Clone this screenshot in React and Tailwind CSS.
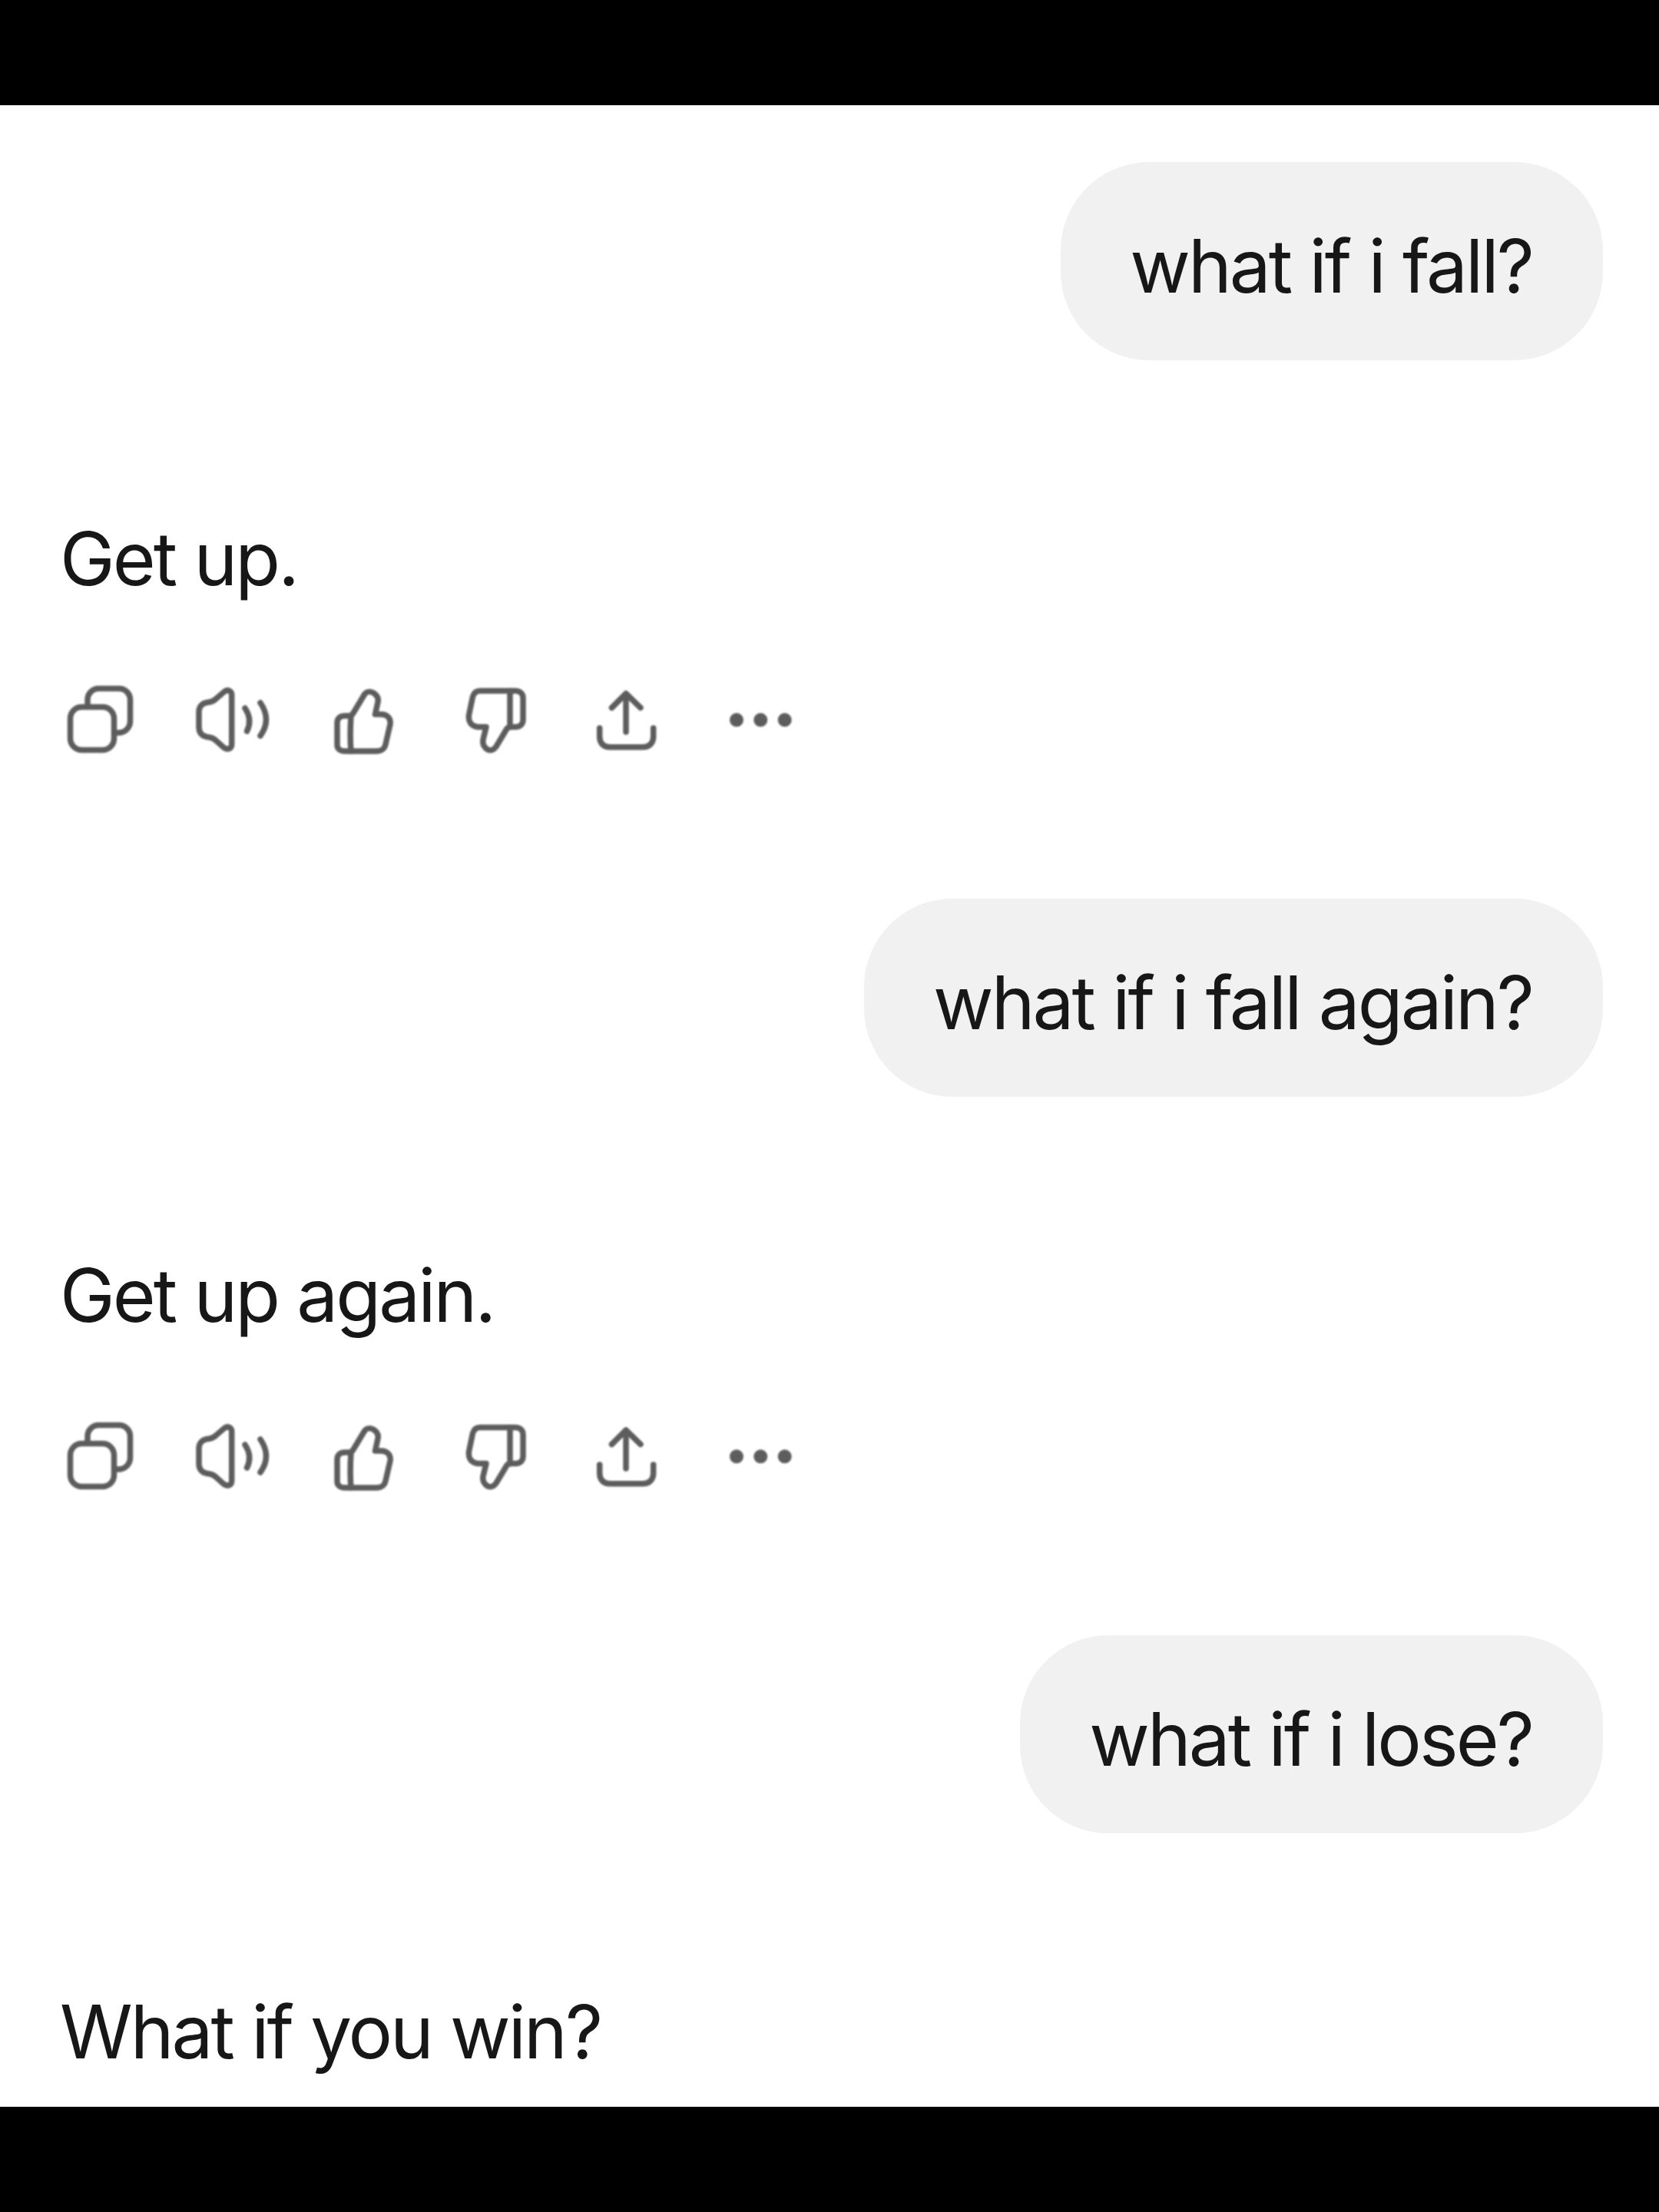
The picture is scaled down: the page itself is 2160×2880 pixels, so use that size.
const ICON = "w-[100px] h-[100px] fill-none stroke-[#5d5d5d] blur-[0.8px]";

function CopyIcon() {
  return (
    <svg viewBox="0 0 100 100" className={ICON} strokeWidth="7.5" strokeLinecap="round" strokeLinejoin="round">
      <rect x="11.5" y="33.5" width="57" height="56" rx="15" />
      <path d="M34 32V24A14.5 14.5 0 0 1 48.5 9.5H75A14.5 14.5 0 0 1 89.5 24V52A15 15 0 0 1 74.5 67H69" />
    </svg>
  );
}

function SpeakerIcon() {
  return (
    <svg viewBox="0 0 100 100" className={ICON} strokeWidth="7.5" strokeLinecap="round" strokeLinejoin="round">
      <path d="M49.7 18C49.7 12 44 10 39.5 14L29 23C26 26 23 27 18 27.5C11 28.5 7 33 7 40V60C7 67 11 71.5 18 72.5C23 73 26 74 29 77L39 86C44 90 49.7 88 49.7 82Z" />
      <path d="M67 35Q77 50 69.5 65" />
      <path d="M87 28Q102 50 87 71" />
    </svg>
  );
}

function ThumbUpIcon() {
  return (
    <svg viewBox="0 0 100 100" className={ICON} strokeWidth="7.5" strokeLinecap="round" strokeLinejoin="round">
      <path d="M33 91H25C19 91 15 88 15 83V54C15 48 19 45 25 45H31C35 45 36 41 38 38L50 18C52 14 57 12.5 62 15C67 18 69 22 68 27L64.5 43H72C81 43 85 49 84 56L78 82C77 88 72 91 66 91Z" />
      <path d="M33 45C32 60 32 80 33 91" />
    </svg>
  );
}

function ThumbDownIcon() {
  return (
    <svg viewBox="0 0 100 100" className={ICON} strokeWidth="7.5" strokeLinecap="round" strokeLinejoin="round">
      <path d="M68 12.5H29C24 12.5 21 15 19.5 20L14.5 44C13.5 52 17 58.5 26 59.5H37L33 76C32 82 34 86 39 89C44 91 47 89 50 85L62 65C64 61 65 59.5 70 59.5H75C81 59.5 85 56 85 50V22C85 16 81 12.5 75 12.5Z" />
      <path d="M68 12.5V59.5" />
    </svg>
  );
}

function ShareIcon() {
  return (
    <svg viewBox="0 0 100 100" className={ICON} strokeWidth="7.5" strokeLinecap="round" strokeLinejoin="round">
      <path d="M47 66V17" />
      <path d="M28.5 34.5L47 16L66 34.5" />
      <path d="M12.7 61V72C12.7 81 18 85.7 26 85.7H69C77 85.7 82.7 81 82.7 72V61" />
    </svg>
  );
}

function MoreIcon() {
  return (
    <svg viewBox="0 0 100 100" className="w-[100px] h-[100px] fill-[#5d5d5d] blur-[0.8px]">
      <circle cx="19" cy="50.3" r="9" />
      <circle cx="50.3" cy="50.3" r="9" />
      <circle cx="81.7" cy="50.3" r="9" />
    </svg>
  );
}

function Actions() {
  const icons = [CopyIcon, SpeakerIcon, ThumbUpIcon, ThumbDownIcon, ShareIcon, MoreIcon];
  return (
    <div className="mt-[107px] ml-[44px] flex">
      {icons.map((Icon, i) => (
        <div key={i} className="flex w-[172px] justify-center">
          <Icon />
        </div>
      ))}
    </div>
  );
}

function Turn({ question, answer }) {
  return (
    <section className="flex flex-col">
      <div className="flex justify-end pr-[73px]">
        <div className="flex h-[258px] items-center rounded-[115px] bg-[#f1f1f1] pt-[11px] pl-[90px] pr-[92px]">
          <span className="blur-[0.5px]">{question}</span>
        </div>
      </div>
      <div className="mt-[198px] h-[113px] pl-[78px]">
        <span className="blur-[0.5px]">{answer}</span>
      </div>
    </section>
  );
}

export default function App() {
  return (
    <div className="flex h-[2880px] w-[2160px] flex-col bg-black font-['Inter',sans-serif] text-[96px] leading-[120px] tracking-[-2.9px] text-[#171717]">
      <div className="h-[137px] shrink-0" />
      <main className="flex h-[2606px] flex-col overflow-hidden bg-white pt-[74px]">
        <Turn question="what if i fall?" answer="Get up." />
        <Actions />
        <div className="mt-[183px]">
          <Turn question="what if i fall again?" answer="Get up again." />
        </div>
        <Actions />
        <div className="mt-[183px]">
          <Turn question="what if i lose?" answer="What if you win?" />
        </div>
      </main>
      <div className="h-[137px] shrink-0" />
    </div>
  );
}
